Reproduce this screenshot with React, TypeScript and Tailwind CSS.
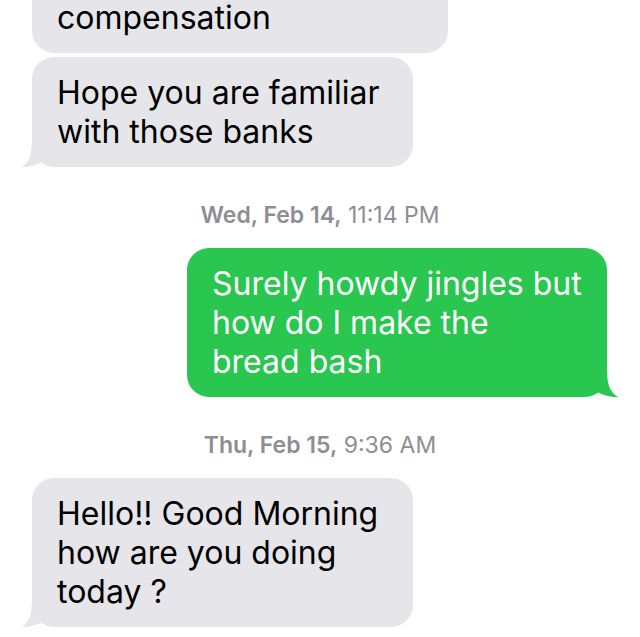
import React from "react";

const font = { fontFamily: "Inter, 'Noto Sans', sans-serif" };

function TailLeft({ color }: { color: string }) {
  return (
    <svg
      className="absolute left-[-10px] bottom-0"
      width="30"
      height="30"
      viewBox="0 0 30 30"
    >
      <path
        d="M10 2 C10 18 7 25 0 30 C8 30 15 28 21 24 L28 13 L10 2 Z"
        fill={color}
      />
    </svg>
  );
}

function TailRight({ color }: { color: string }) {
  return (
    <svg
      className="absolute right-[-11px] bottom-0"
      width="30"
      height="30"
      viewBox="0 0 30 30"
    >
      <path
        d="M19 2 C19 18 22 25 30 30 C22 30 14 28 8 24 L2 13 L19 2 Z"
        fill={color}
      />
    </svg>
  );
}

export default function App() {
  return (
    <div
      className="w-[640px] h-[637px] overflow-hidden bg-white flex flex-col"
      style={font}
    >
      <div className="pl-[32px] mt-[-60px]">
        <div className="w-[416px] rounded-[22px] bg-[#e5e5ea] pl-[25px] pt-[58px] pb-[16px] text-[32px] leading-[39px] text-black">
          compensation
        </div>
      </div>
      <div className="pl-[32px] mt-[4px]">
        <div className="relative w-[381px] rounded-[22px] bg-[#e5e5ea] pl-[25px] py-[16px] text-[32px] leading-[39px] text-black">
          <TailLeft color="#e5e5ea" />
          <div className="relative">
            Hope you are familiar
            <br />
            with those banks
          </div>
        </div>
      </div>
      <div className="mt-[36px] h-[24px] text-center text-[23px] leading-[24px] text-[#8e8e93]">
        <span className="font-semibold">Wed, Feb 14,</span> 11:14 PM
      </div>
      <div className="mt-[21px] flex justify-end pr-[33px]">
        <div className="relative w-[420px] rounded-[22px] bg-[#29c74f] pl-[25px] py-[16px] text-[32px] leading-[39px] text-white">
          <TailRight color="#29c74f" />
          <div className="relative">
            Surely howdy jingles but
            <br />
            how do I make the
            <br />
            bread bash
          </div>
        </div>
      </div>
      <div className="mt-[36px] h-[24px] text-center text-[23px] leading-[24px] text-[#8e8e93]">
        <span className="font-semibold">Thu, Feb 15,</span> 9:36 AM
      </div>
      <div className="pl-[32px] mt-[21px]">
        <div className="relative w-[381px] rounded-[22px] bg-[#e5e5ea] pl-[25px] py-[16px] text-[32px] leading-[39px] text-black">
          <TailLeft color="#e5e5ea" />
          <div className="relative">
            Hello!! Good Morning
            <br />
            how are you doing
            <br />
            today ?
          </div>
        </div>
      </div>
    </div>
  );
}
